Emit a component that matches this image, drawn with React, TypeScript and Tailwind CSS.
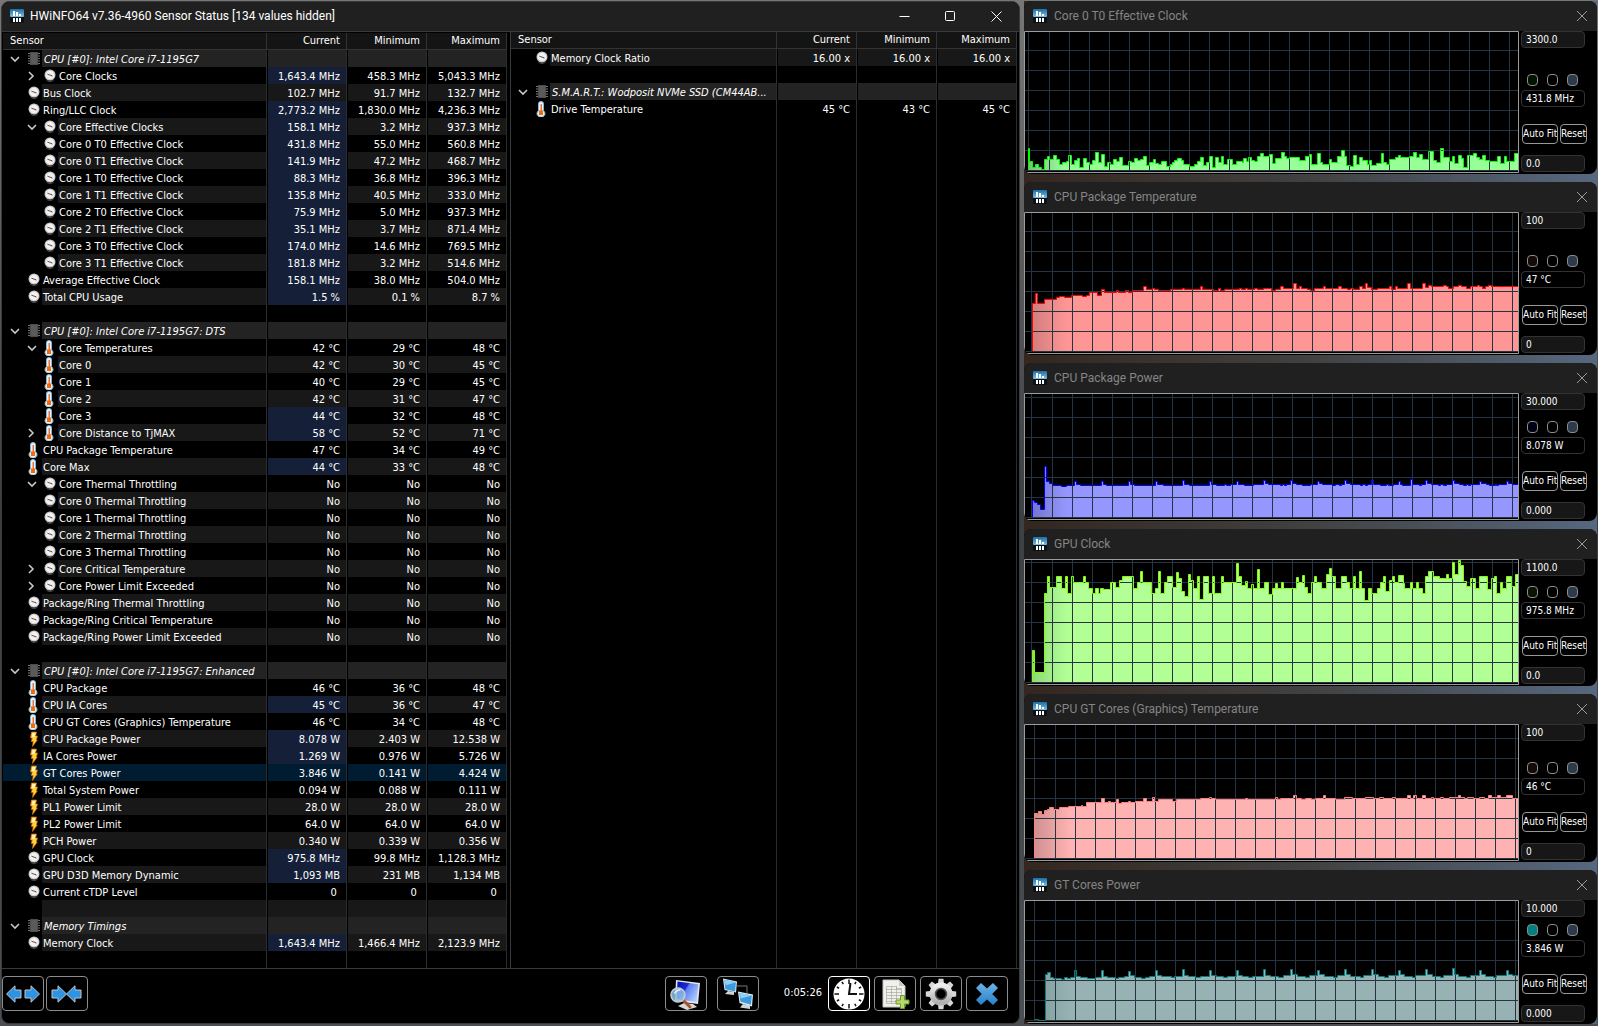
import React from 'react';
import clsx from 'clsx';

type IconName = 'chip' | 'gauge' | 'temp' | 'power';

interface ISensorRow {
  type: 'group' | 'sensor' | 'blank';
  name?: string;
  icon?: IconName;
  nested?: boolean;
  chevron?: 'open' | 'closed';
  values?: string[];
  changed?: boolean;
  selected?: boolean;
}

interface IGraph {
  title: string;
  max: string;
  value: string;
  min: string;
  height: number;
  offset: number;
  line: string;
  fill: string;
  fade: string;
  swatch: string;
  unit: number;
  base: number;
  points: number[][];
}

const group = (name: string): ISensorRow => ({ type: 'group', name, icon: 'chip', chevron: 'open' });
const blank = (): ISensorRow => ({ type: 'blank' });
const sensor = (icon: IconName, name: string, values: string, extra: Partial<ISensorRow> = {}): ISensorRow => ({
  type: 'sensor',
  icon,
  name,
  values: values.split('|'),
  ...extra,
});

const child = { nested: true };
const changed = { changed: true };
const changedChild = { nested: true, changed: true };

const mainRows: ISensorRow[] = [
  group('CPU [#0]: Intel Core i7-1195G7'),
  sensor('gauge', 'Core Clocks', '1,643.4 MHz|458.3 MHz|5,043.3 MHz', { ...changedChild, chevron: 'closed' }),
  sensor('gauge', 'Bus Clock', '102.7 MHz|91.7 MHz|132.7 MHz'),
  sensor('gauge', 'Ring/LLC Clock', '2,773.2 MHz|1,830.0 MHz|4,236.3 MHz', changed),
  sensor('gauge', 'Core Effective Clocks', '158.1 MHz|3.2 MHz|937.3 MHz', { ...changedChild, chevron: 'open' }),
  sensor('gauge', 'Core 0 T0 Effective Clock', '431.8 MHz|55.0 MHz|560.8 MHz', changedChild),
  sensor('gauge', 'Core 0 T1 Effective Clock', '141.9 MHz|47.2 MHz|468.7 MHz', changedChild),
  sensor('gauge', 'Core 1 T0 Effective Clock', '88.3 MHz|36.8 MHz|396.3 MHz', changedChild),
  sensor('gauge', 'Core 1 T1 Effective Clock', '135.8 MHz|40.5 MHz|333.0 MHz', changedChild),
  sensor('gauge', 'Core 2 T0 Effective Clock', '75.9 MHz|5.0 MHz|937.3 MHz', changedChild),
  sensor('gauge', 'Core 2 T1 Effective Clock', '35.1 MHz|3.7 MHz|871.4 MHz', changedChild),
  sensor('gauge', 'Core 3 T0 Effective Clock', '174.0 MHz|14.6 MHz|769.5 MHz', changedChild),
  sensor('gauge', 'Core 3 T1 Effective Clock', '181.8 MHz|3.2 MHz|514.6 MHz', changedChild),
  sensor('gauge', 'Average Effective Clock', '158.1 MHz|38.0 MHz|504.0 MHz', changed),
  sensor('gauge', 'Total CPU Usage', '1.5 %|0.1 %|8.7 %', changed),
  blank(),
  group('CPU [#0]: Intel Core i7-1195G7: DTS'),
  sensor('temp', 'Core Temperatures', '42 °C|29 °C|48 °C', { ...child, chevron: 'open' }),
  sensor('temp', 'Core 0', '42 °C|30 °C|45 °C', child),
  sensor('temp', 'Core 1', '40 °C|29 °C|45 °C', child),
  sensor('temp', 'Core 2', '42 °C|31 °C|47 °C', child),
  sensor('temp', 'Core 3', '44 °C|32 °C|48 °C', changedChild),
  sensor('temp', 'Core Distance to TjMAX', '58 °C|52 °C|71 °C', { ...changedChild, chevron: 'closed' }),
  sensor('temp', 'CPU Package Temperature', '47 °C|34 °C|49 °C'),
  sensor('temp', 'Core Max', '44 °C|33 °C|48 °C', changed),
  sensor('gauge', 'Core Thermal Throttling', 'No|No|No', { ...child, chevron: 'open' }),
  sensor('gauge', 'Core 0 Thermal Throttling', 'No|No|No', child),
  sensor('gauge', 'Core 1 Thermal Throttling', 'No|No|No', child),
  sensor('gauge', 'Core 2 Thermal Throttling', 'No|No|No', child),
  sensor('gauge', 'Core 3 Thermal Throttling', 'No|No|No', child),
  sensor('gauge', 'Core Critical Temperature', 'No|No|No', { ...child, chevron: 'closed' }),
  sensor('gauge', 'Core Power Limit Exceeded', 'No|No|No', { ...child, chevron: 'closed' }),
  sensor('gauge', 'Package/Ring Thermal Throttling', 'No|No|No'),
  sensor('gauge', 'Package/Ring Critical Temperature', 'No|No|No'),
  sensor('gauge', 'Package/Ring Power Limit Exceeded', 'No|No|No'),
  blank(),
  group('CPU [#0]: Intel Core i7-1195G7: Enhanced'),
  sensor('temp', 'CPU Package', '46 °C|36 °C|48 °C'),
  sensor('temp', 'CPU IA Cores', '45 °C|36 °C|47 °C', changed),
  sensor('temp', 'CPU GT Cores (Graphics) Temperature', '46 °C|34 °C|48 °C'),
  sensor('power', 'CPU Package Power', '8.078 W|2.403 W|12.538 W', changed),
  sensor('power', 'IA Cores Power', '1.269 W|0.976 W|5.726 W', changed),
  sensor('power', 'GT Cores Power', '3.846 W|0.141 W|4.424 W', { selected: true }),
  sensor('power', 'Total System Power', '0.094 W|0.088 W|0.111 W'),
  sensor('power', 'PL1 Power Limit', '28.0 W|28.0 W|28.0 W'),
  sensor('power', 'PL2 Power Limit', '64.0 W|64.0 W|64.0 W'),
  sensor('power', 'PCH Power', '0.340 W|0.339 W|0.356 W'),
  sensor('gauge', 'GPU Clock', '975.8 MHz|99.8 MHz|1,128.3 MHz', changed),
  sensor('gauge', 'GPU D3D Memory Dynamic', '1,093 MB|231 MB|1,134 MB', changed),
  sensor('gauge', 'Current cTDP Level', '0\u00a0|0\u00a0|0\u00a0'),
  blank(),
  group('Memory Timings'),
  sensor('gauge', 'Memory Clock', '1,643.4 MHz|1,466.4 MHz|2,123.9 MHz', changed),
];

const sideRows: ISensorRow[] = [
  sensor('gauge', 'Memory Clock Ratio', '16.00 x|16.00 x|16.00 x'),
  blank(),
  group('S.M.A.R.T.: Wodposit NVMe SSD (CM44AB...'),
  sensor('temp', 'Drive Temperature', '45 °C|43 °C|45 °C'),
];

// "x:y x:y ..." -> [[x, y], ...], every pair starts a new step
const parse = (s: string) => s.split(' ').map((p) => p.split(':').map(Number));

const coreClock = parse(
  '24:40 27:80 36:97 47:89 54:97 63:103 74:73 83:64 89:73 101:61 108:73 117:88 126:83 140:80 146:61 153:88 162:76 172:70 179:97 191:70 198:82 207:88 216:76 226:52 234:82 245:58 252:94 263:83 270:88 281:73 290:79 299:67 306:91 325:79 334:83 343:70 351:76 360:73 371:64 378:92 388:82 399:73 405:85 414:88 425:80 439:94 450:88 457:82 463:76 471:70 483:76 490:88 507:94 524:88 533:80 542:67 549:91 560:82 569:64 576:97 587:67 594:82 604:64 611:88 623:73 636:88 650:79 668:82 671:70 678:79 686:67 693:76 704:79 713:64 722:55 729:64 747:58 756:85 767:70 785:52 792:64 800:70 809:67 837:76 857:64 867:58 874:88 891:55 900:82 908:88 928:73 935:82 953:64 963:46 972:64 980:91 990:94 1001:61 1008:88 1019:67 1027:76 1041:88 1049:76 1055:91 1069:85 1083:55 1090:82 1100:88 1108:73 1126:67 1135:61 1142:67 1168:64 1180:52 1188:67 1198:58 1206:73 1225:49 1240:76 1249:82 1261:40 1269:67 1289:79 1297:64 1304:86 1315:61 1323:70 1330:97 1342:61 1360:55 1370:67 1378:73 1387:61 1396:76 1409:79 1433:64 1440:85 1452:64 1459:79 1484:55',
);

const packageTemp = parse(
  '34:388 42:358 48:388 66:376 98:370 106:367 122:370 139:364 170:367 180:364 188:355 210:364 220:346 228:355 261:349 268:355 287:349 293:355 304:349 335:337 342:346 360:343 366:346 375:349 408:346 440:343 447:346 489:337 496:346 524:349 539:343 545:349 555:346 596:343 602:346 612:343 618:346 637:343 643:346 661:343 682:349 692:346 708:337 716:343 741:328 749:343 758:337 765:343 780:346 788:349 800:343 823:337 829:343 864:337 871:343 888:346 897:343 905:346 921:337 928:343 937:328 944:340 953:346 970:343 1003:337 1008:346 1018:337 1025:343 1051:328 1058:343 1092:328 1099:340 1108:334 1115:337 1150:334 1157:337 1163:343 1175:337 1190:334 1197:337 1210:343 1222:337 1240:334 1247:337 1254:343 1263:337 1272:334 1278:337',
);

const packagePower = parse(
  '36:124 43:130 52:134 61:149 74:22 79:67 88:73 97:79 123:82 138:79 164:67 170:76 180:79 245:67 251:76 259:79 326:67 332:76 342:79 407:67 413:76 430:79 488:64 494:76 508:79 569:67 575:76 590:79 612:76 618:79 630:76 650:67 656:76 672:79 700:76 731:64 737:73 746:76 780:79 786:76 792:79 800:76 812:64 818:73 830:76 848:79 872:76 893:67 899:73 908:76 938:79 946:76 958:79 964:76 974:64 980:73 990:76 1020:79 1027:76 1036:79 1042:76 1055:64 1061:76 1082:79 1100:76 1104:79 1120:76 1136:67 1142:76 1148:79 1172:61 1178:76 1198:79 1204:76 1217:64 1223:73 1234:76 1254:79 1262:76 1270:79 1278:76 1298:64 1304:73 1318:76 1330:79 1340:76 1346:79 1352:76 1379:67 1385:73 1398:76 1408:79 1426:76 1430:79 1436:76 1460:67 1466:73 1476:76',
);

const gpuClock = parse(
  '36:571 43:637 73:401 82:349 89:382 109:349 125:385 136:349 143:401 154:349 161:367 190:349 197:367 206:385 217:401 226:385 234:401 240:385 250:388 271:367 286:382 298:361 307:349 340:385 352:367 361:334 368:367 395:401 406:385 415:334 422:401 433:367 442:349 458:382 469:337 476:355 485:394 494:409 505:343 512:361 521:385 532:349 538:418 550:349 565:401 577:349 584:401 604:349 611:367 649:310 656:349 664:376 676:364 683:385 694:373 701:385 712:328 719:385 734:367 745:403 758:385 767:370 773:385 784:367 791:385 829:352 836:367 847:346 854:382 863:401 874:367 883:349 890:367 905:385 920:343 928:325 935:349 946:385 964:349 979:367 988:385 1000:349 1007:385 1018:334 1025:385 1034:421 1046:385 1054:401 1072:385 1081:367 1090:349 1097:394 1108:361 1117:349 1124:367 1135:346 1150:370 1153:385 1171:367 1178:385 1189:367 1196:385 1207:400 1216:349 1225:334 1240:349 1259:355 1280:343 1286:357 1297:307 1304:343 1315:301 1322:316 1330:364 1339:379 1351:355 1366:385 1378:349 1402:388 1414:355 1423:349 1430:400 1441:367 1447:385 1459:349 1474:379 1486:343',
);

const gtTemp = parse(
  '40:370 47:373 51:364 57:373 66:361 74:358 81:352 90:358 106:352 132:349 166:346 170:349 180:337 220:325 228:337 240:334 245:337 261:328 268:340 276:337 293:334 300:337 312:334 335:325 342:334 359:322 366:334 375:328 413:334 424:328 489:325 513:322 520:325 530:328 612:325 618:328 692:322 699:328 708:325 741:317 749:325 763:328 775:325 790:328 802:325 823:317 830:325 855:328 880:322 903:325 937:322 960:325 975:322 987:325 1010:322 1020:325 1051:317 1058:325 1068:317 1075:325 1092:317 1099:325 1115:322 1123:325 1140:322 1150:325 1165:322 1189:317 1196:322 1205:325 1215:322 1230:325 1247:322 1260:325 1271:317 1278:322 1296:317 1303:322 1320:317 1335:325',
);

const gtPower = parse(
  '40:989 50:991 68:853 75:848 82:862 92:865 112:868 122:862 130:865 138:862 148:842 154:859 164:862 184:865 204:862 221:842 227:859 238:862 260:865 268:862 284:859 294:845 300:857 310:862 330:865 340:862 350:859 367:842 374:857 384:859 410:862 418:859 441:838 447:857 458:859 476:862 490:859 514:842 520:857 532:859 552:862 562:859 587:842 593:857 604:859 620:862 630:859 661:838 667:856 680:859 700:862 714:857 734:838 740:854 752:859 774:862 784:857 807:842 813:855 826:859 850:862 860:857 880:838 886:854 896:859 924:862 932:857 953:838 960:854 972:859 990:862 1000:857 1027:842 1033:854 1044:859 1064:862 1072:857 1100:838 1106:855 1118:859 1140:862 1150:857 1173:836 1179:853 1190:859 1210:862 1222:857 1246:842 1252:855 1264:859 1284:862 1294:857 1320:842 1326:854 1336:857',
);

const graphs: IGraph[] = [
  {
    title: 'Core 0 T0 Effective Clock', max: '3300.0', value: '431.8 MHz', min: '0.0', height: 142, offset: 4,
    line: '#00ff00', fill: '#96ff96', fade: '#7dbb7d', swatch: 'bg-[#001400]', unit: 3, base: 106, points: coreClock,
  },
  {
    title: 'CPU Package Temperature', max: '100', value: '47 °C', min: '0', height: 142, offset: 7,
    line: '#ff0000', fill: '#ff9696', fade: '#d07c7c', swatch: 'bg-[#140a08]', unit: 2.7128, base: 531, points: packageTemp,
  },
  {
    title: 'CPU Package Power', max: '30.000', value: '8.078 W', min: '0.000', height: 127, offset: 7,
    line: '#0000ff', fill: '#9696ff', fade: '#7474c8', swatch: 'bg-[#000014]', unit: 3, base: 174, points: packagePower,
  },
  {
    title: 'GPU Clock', max: '1100.0', value: '975.8 MHz', min: '0.0', height: 126, offset: 7,
    line: '#80ff00', fill: '#b2ff96', fade: '#8fd578', swatch: 'bg-[#0a1400]', unit: 3, base: 668, points: gpuClock,
  },
  {
    title: 'CPU GT Cores (Graphics) Temperature', max: '100', value: '46 °C', min: '0', height: 137, offset: 10,
    line: '#ff8080', fill: '#ffb2b2', fade: '#cf9090', swatch: 'bg-[#140a08]', unit: 2.7128, base: 506, points: gtTemp,
  },
  {
    title: 'GT Cores Power', max: '10.000', value: '3.846 W', min: '0.000', height: 123, offset: 10,
    line: '#008080', fill: '#96b2b2', fade: '#7f9c9c', swatch: 'bg-[#008080]', unit: 2.7128, base: 992, points: gtPower,
  },
];

const CHART_WIDTH = 495;

const Chart = ({ graph, id }: { graph: IGraph; id: string }) => {
  const { height, offset, points, unit, base } = graph;
  const floor = height - 3;
  const steps = points.map(([x, y]) => [Math.floor(x / unit) - 3.5, floor + 0.5 - Math.round((base - y) / 3)]);

  let outline = `M${steps[0][0]} ${floor}`;
  steps.forEach(([x, y]) => {
    outline += `H${x}V${y}`;
  });
  outline += `H${CHART_WIDTH - 1}`;

  const columns = [offset];
  for (let x = offset + 21; x < CHART_WIDTH; x += 20) columns.push(x);
  const lines: number[] = [];
  for (let y = floor; y > 0; y -= 20) lines.push(y);

  return (
    <svg
      viewBox={`0 0 ${CHART_WIDTH} ${height}`}
      preserveAspectRatio="none"
      height={height}
      className="block w-full"
      role="img"
      aria-label={graph.title}
    >
      <defs>
        <linearGradient id={id} gradientUnits="userSpaceOnUse" x1={offset} x2={offset + 36} y1="0" y2="0">
          <stop offset="0" stopColor={graph.fade} />
          <stop offset="1" stopColor={graph.fill} />
        </linearGradient>
      </defs>
      <rect width={CHART_WIDTH} height={height} fill="#000" />
      <path d={`${outline}V${floor}Z`} fill={`url(#${id})`} />
      {columns.map((x) => (
        <rect key={x} x={x} y="0" width="1" height={floor} fill="#253443" />
      ))}
      {lines.map((y) => (
        <rect key={y} x="0" y={y} width={CHART_WIDTH} height="1" fill="#253443" />
      ))}
      <path d={outline} fill="none" stroke={graph.line} />
      <path d={`M.5 ${height - 0.5}V.5H${CHART_WIDTH - 0.5}V${height - 0.5}Z`} fill="none" stroke="#9c9c9c" />
    </svg>
  );
};

const AppIcon = () => (
  <svg width="14" height="14" viewBox="0 0 14 14" className="shrink-0">
    <defs>
      <linearGradient id="app-top" x1="0" x2="0" y1="0" y2="1">
        <stop offset="0" stopColor="#1d6ea5" />
        <stop offset="1" stopColor="#7cc0e6" />
      </linearGradient>
    </defs>
    <rect width="14" height="14" rx="1" fill="#0d1115" />
    <rect width="14" height="8" rx="1" fill="url(#app-top)" />
    <path d="M3 2h2v5H3zM6 3h2v4H6zM9 5h2v2H9zM3 9h2v4H3zM6 9h2v4H6zM9 9h2v4H9z" fill="#fff" />
  </svg>
);

const SensorIcon = ({ name }: { name: IconName }) => {
  if (name === 'chip') {
    return (
      <svg width="12" height="14" viewBox="0 0 12 14">
        <path d="M0 1.5h12M0 4h12M0 6.5h12M0 9h12M0 11.5h12" stroke="#777" />
        <rect x="2" y="0" width="8" height="13" fill="#4d4d4d" />
        <rect x="3" y="1" width="6" height="11" fill="#5a5a5a" />
      </svg>
    );
  }
  if (name === 'temp') {
    return (
      <svg width="12" height="16" viewBox="0 0 12 16">
        <path d="M2.500 2.500a2.500 2 0 0 1 5 0v7.200a4 3.600 0 1 1-5 0z" fill="#e4f3fa" stroke="#86b4d2" />
        <path d="M4.500 3h1.500v8H4.500z" fill="#e8763a" />
        <rect x="3" y="9.500" width="4" height="4.500" fill="#f76a08" />
      </svg>
    );
  }
  if (name === 'power') {
    return (
      <svg width="12" height="16" viewBox="0 0 12 16">
        <path d="M3.500 1h5L7.600 5h1.900l-1.200 4h1L4.500 15.500l.7-5H3.300l.9-3.500H2.500z" fill="#ffd23a" stroke="#d8690c" strokeWidth=".7" />
        <path d="M4.500 2h3L6.500 6H4z" fill="#fff2c0" />
      </svg>
    );
  }
  return (
    <svg width="12" height="14" viewBox="0 0 12 14">
      <circle cx="6" cy="6" r="5.5" fill="#c9c9c9" />
      <circle cx="6" cy="6" r="4.3" fill="#f1f1f1" />
      <path d="M3.400 5.200 8 6.800" stroke="#555" />
      <path d="M7 6.500l1.500.5" stroke="#b33" />
      <path d="M2.500 11.500Q6 14 9.500 11.500" fill="none" stroke="#444" />
    </svg>
  );
};

const Chevron = ({ open }: { open: boolean }) => (
  <svg width="10" height="10" viewBox="0 0 10 10" fill="none" stroke="#c8c8c8" strokeWidth="1.6">
    <path d={open ? 'M1 3l4 4 4-4' : 'M2 1l4 4-4 4'} />
  </svg>
);

const SensorTable = ({ rows, label }: { rows: ISensorRow[]; label: string }) => (
  <table
    className="w-full h-full table-fixed border-separate border-spacing-0 text-[11px] leading-[15px]"
    aria-label={label}
  >
    <thead>
      <tr className="h-[17px] bg-[#141414] leading-4">
        <th className="h-[17px] p-0 pl-[7px] text-left font-normal border-b border-r border-[#333]">Sensor</th>
        {['Current', 'Minimum', 'Maximum'].map((title) => (
          <th key={title} className="w-[80px] p-0 pr-[6px] text-right font-normal border-b border-r border-[#333]">
            {title}
          </th>
        ))}
      </tr>
    </thead>
    <tbody>
      {rows.map((row, i) => {
        const band = row.selected
          ? 'bg-[#001c31]'
          : row.type === 'group'
            ? 'bg-[#232323]'
            : i % 2 === 0
              ? 'bg-[#181818]'
              : 'bg-black';
        return (
          <tr key={i} className="h-[17px]">
            <td className={clsx('p-0 border-r border-[#2a2d30]', row.selected && 'bg-[#001c31]')}>
              <div className="flex h-[17px] overflow-hidden">
                <div
                  className={clsx(
                    'flex shrink-0 items-center pr-[2px]',
                    row.nested ? 'w-[55px] pl-[24px]' : 'w-[39px] pl-[7px]',
                  )}
                >
                  {row.chevron && (
                    <button aria-label={`Toggle ${row.name}`}>
                      <Chevron open={row.chevron === 'open'} />
                    </button>
                  )}
                  <span className="ml-auto">{row.icon && <SensorIcon name={row.icon} />}</span>
                </div>
                <div
                  className={clsx(
                    'flex-1 pt-[2px] whitespace-nowrap overflow-hidden',
                    band,
                    row.type === 'group' ? 'pl-[2px] italic' : 'pl-px',
                  )}
                >
                  {row.name}
                </div>
              </div>
            </td>
            {[0, 1, 2].map((col) => (
              <td
                key={col}
                className={clsx(
                  'p-0 pt-[2px] pr-[6px] text-right whitespace-nowrap border-r border-r-[#2a2d30] border-l border-l-black',
                  col === 0 && row.changed ? 'bg-[#152038]' : band,
                )}
              >
                {row.values?.[col]}
              </td>
            ))}
          </tr>
        );
      })}
      <tr className="h-full">
        {[0, 1, 2, 3].map((col) => (
          <td key={col} className="p-0 border-r border-[#2a2d30]" />
        ))}
      </tr>
    </tbody>
  </table>
);

const ToolButton = ({ label, active, children }: { label: string; active?: boolean; children: React.ReactNode }) => (
  <button
    aria-label={label}
    className={clsx(
      'flex h-[35px] w-[42px] shrink-0 items-center justify-center rounded border bg-black',
      active ? 'border-white' : 'border-[#8c8c8c]',
    )}
  >
    {children}
  </button>
);

const ARROW_LEFT = 'M0.5 9 9 0.8V5h6v8H9v4.2z';

const ArrowsIcon = ({ inward }: { inward?: boolean }) => (
  <svg width="34" height="18" viewBox="0 0 34 18" fill="#2f93e4" stroke="#b9c6d0" strokeWidth="1">
    <path d={ARROW_LEFT} transform={inward ? 'translate(16 0)' : undefined} />
    <path d={ARROW_LEFT} transform={inward ? 'translate(17 0) scale(-1 1)' : 'translate(34 0) scale(-1 1)'} />
  </svg>
);

const MonitorSearchIcon = () => (
  <svg width="32" height="32" viewBox="0 0 32 32">
    <defs>
      <linearGradient id="screen" x1="0" x2="1" y1="0" y2=".6">
        <stop offset="0" stopColor="#0010b8" />
        <stop offset=".45" stopColor="#1b2bd0" />
        <stop offset=".5" stopColor="#5c7cf0" />
        <stop offset="1" stopColor="#a9c8ff" />
      </linearGradient>
    </defs>
    <path d="M14 25l9 1 4 3-10 3-9-4z" fill="#d8d8d8" />
    <path d="M6 2l24 3-2 21-23-3z" fill="#e9e9e9" />
    <path d="M7.500 3.500l20.800 2.700-1.700 17.800L6.600 21.200z" fill="url(#screen)" />
    <path d="M12 21l8 8" stroke="#a4562a" strokeWidth="3" strokeLinecap="round" />
    <circle cx="8" cy="17" r="7" fill="#8fc0e4" fillOpacity=".85" stroke="#c4ccd2" strokeWidth="1.600" />
    <path d="M4.500 15.500q2-4 6-3.500" fill="none" stroke="#e8f6ff" strokeWidth="1.500" />
  </svg>
);

const NetworkIcon = () => (
  <svg width="32" height="32" viewBox="0 0 32 32">
    <path d="M15 8h10v7" fill="none" stroke="#777" />
    <path d="M6 13l6 1v3l-9-1z" fill="#cfd4d8" />
    <path d="M1 .5l14 3-1 11L2.500 12z" fill="#e4eaee" />
    <path d="M2.200 1.800l11.700 2.500-.8 9.200-9.700-2.300z" fill="#3b9be0" />
    <path d="M2.200 1.800l11.700 2.500-10 3z" fill="#8fd0f6" />
    <path d="M21 26l7 1.500v3.500l-10-1.500z" fill="#cfd4d8" />
    <path d="M16 13.500l15 3-1 12-12.500-3.500z" fill="#e4eaee" />
    <path d="M17.200 14.900l12.600 2.500-.8 9.400-10.500-3z" fill="#3b9be0" />
    <path d="M17.200 14.900l12.600 2.500-11 3.200z" fill="#8fd0f6" />
  </svg>
);

const ClockIcon = () => (
  <svg width="32" height="32" viewBox="0 0 32 32">
    <circle cx="16" cy="16" r="15.500" fill="#fff" />
    {Array.from({ length: 12 }, (_, i) => (
      <path key={i} d={i % 3 ? 'M16 2v2.500' : 'M16 1.500v4.500'} stroke="#111" strokeWidth="1.500" transform={`rotate(${i * 30} 16 16)`} />
    ))}
    <path d="M17.500 5 16 16h8" fill="none" stroke="#111" strokeWidth="2" />
  </svg>
);

const SheetIcon = () => (
  <svg width="30" height="32" viewBox="0 0 30 32">
    <path d="M3 2h16l6 6v21H3z" fill="#f1f1ec" stroke="#c5c5c0" />
    <path d="M19 2v6h6z" fill="#c9c9c4" />
    <path d="M6.500 8.500h10v2h5v15h-15zM6.500 11.500h15M6.500 14.500h15M6.500 17.500h15M6.500 20.500h15M6.500 23.500h15M11.500 8v18M16.500 8v18" fill="none" stroke="#a9a9a4" strokeWidth=".7" />
    <path d="M20.500 17.500h4v4.500h4.500v4h-4.500v4.500h-4V26H16v-4h4.500z" fill="#b5d96a" stroke="#6f9a28" />
  </svg>
);

const GearIcon = () => (
  <svg width="32" height="32" viewBox="0 0 32 32">
    <defs>
      <linearGradient id="gear" x1="0" x2="0" y1="0" y2="1">
        <stop offset="0" stopColor="#efefef" />
        <stop offset="1" stopColor="#b0b0b0" />
      </linearGradient>
    </defs>
    {Array.from({ length: 8 }, (_, i) => (
      <path key={i} d="M12.800 7 13.600.8h4.800l.8 6.200z" fill="#d8d8d8" transform={`rotate(${i * 45} 16 16)`} />
    ))}
    <circle cx="16" cy="16" r="8.500" fill="none" stroke="url(#gear)" strokeWidth="6" />
    <circle cx="16" cy="16" r="5.500" fill="#000" stroke="#555" strokeWidth="1.500" />
  </svg>
);

const CloseToolIcon = () => (
  <svg width="26" height="26" viewBox="0 0 26 26">
    <defs>
      <linearGradient id="cross" x1="0" x2="0" y1="0" y2="1">
        <stop offset="0" stopColor="#6db4e4" />
        <stop offset="1" stopColor="#2580cd" />
      </linearGradient>
    </defs>
    <path d="M2 7 7 2l6 5.500L19 2l5 5-5.800 6L24 19l-5 5-6-5.500L7 24l-5-5 5.800-6z" fill="url(#cross)" />
  </svg>
);

const MainWindow = () => (
  <main className="flex flex-col overflow-hidden rounded-lg border border-[#3a3a3a] bg-black">
    <header className="flex h-[29px] items-center bg-[#202020] pb-px pl-2 text-xs font-[Roboto,sans-serif]">
      <AppIcon />
      <h1 className="flex-1 pl-[6px]">HWiNFO64 v7.36-4960 Sensor Status [134 values hidden]</h1>
      <button aria-label="Minimize" className="flex w-[46px] justify-center">
        <svg width="11" height="11" viewBox="0 0 11 11" stroke="#fff">
          <path d="M.5 5.500h10" />
        </svg>
      </button>
      <button aria-label="Maximize" className="flex w-[46px] justify-center">
        <svg width="11" height="11" viewBox="0 0 11 11" stroke="#fff" fill="none">
          <rect x=".5" y=".5" width="9" height="9" rx="1" />
        </svg>
      </button>
      <button aria-label="Close" className="flex w-[46px] justify-center">
        <svg width="11" height="11" viewBox="0 0 11 11" stroke="#fff">
          <path d="M.5.5l10 10M10.500.5l-10 10" />
        </svg>
      </button>
    </header>
    <div className="grid flex-1 grid-cols-[508fr_509fr] border-y border-[#3a3a3a]">
      <div className="pl-px pr-[3px] pt-px">
        <SensorTable rows={mainRows} label="Sensors" />
      </div>
      <div className="border-l border-[#3a3a3a] pr-[2px]">
        <SensorTable rows={sideRows} label="More sensors" />
      </div>
    </div>
    <footer className="flex h-[54px] items-center pb-[5px] pr-[11px] text-[11px]">
      <div className="flex gap-[2px]">
        <ToolButton label="Expand columns">
          <ArrowsIcon />
        </ToolButton>
        <ToolButton label="Shrink columns">
          <ArrowsIcon inward />
        </ToolButton>
      </div>
      <div className="ml-auto flex items-center">
        <div className="flex gap-[10px]">
          <ToolButton label="System summary">
            <MonitorSearchIcon />
          </ToolButton>
          <ToolButton label="Remote monitoring">
            <NetworkIcon />
          </ToolButton>
        </div>
        <time className="pl-[25px] pr-[6px]">0:05:26</time>
        <div className="flex gap-1">
          <ToolButton label="Reset clock" active>
            <ClockIcon />
          </ToolButton>
          <ToolButton label="Start logging">
            <SheetIcon />
          </ToolButton>
          <ToolButton label="Settings">
            <GearIcon />
          </ToolButton>
          <ToolButton label="Close sensors">
            <CloseToolIcon />
          </ToolButton>
        </div>
      </div>
    </footer>
  </main>
);

const field = 'h-[17px] w-[64px] shrink-0 rounded-sm border border-[#333] px-1 text-[10px] leading-[15px] text-white';
const swatchButton = 'h-3 w-[11px] rounded border border-[#8c8c8c]';
const smallButton = 'h-5 overflow-hidden whitespace-nowrap rounded border border-[#999] bg-black text-[10px] leading-none';

const GraphWindow = ({ graph, id }: { graph: IGraph; id: string }) => (
  <section className="overflow-hidden rounded-lg bg-black pb-px">
    <header className="flex h-[30px] items-center bg-[#202020] pb-px pl-[9px] pr-[10px] text-xs font-[Roboto,sans-serif] text-[#858585]">
      <AppIcon />
      <h2 className="flex-1 pl-[7px]">{graph.title}</h2>
      <button aria-label={`Close ${graph.title}`}>
        <svg width="10" height="10" viewBox="0 0 10 10" stroke="#9a9a9a">
          <path d="M0 0l10 10M10 0L0 10" />
        </svg>
      </button>
    </header>
    <div className="flex">
      <div className="min-w-0 flex-1">
        <Chart graph={graph} id={id} />
      </div>
      <div className="flex w-[78px] flex-col pl-[2px] pb-px">
        <input aria-label="Graph maximum" className={clsx(field, 'bg-[#171717]')} defaultValue={graph.max} />
        <div className="mt-auto flex gap-[9px] pl-[6px]">
          <button aria-label="Line color" className={clsx(swatchButton, graph.swatch)} />
          <button aria-label="Background color" className={clsx(swatchButton, 'bg-black')} />
          <button aria-label="Grid color" className={clsx(swatchButton, 'bg-[#2c3a4b]')} />
        </div>
        <input aria-label="Current value" readOnly className={clsx(field, 'mt-1 bg-black')} value={graph.value} />
        <div className="mt-[17px] flex gap-[2px] pl-px">
          <button className={clsx(smallButton, 'w-[36px]')}>Auto Fit</button>
          <button className={clsx(smallButton, 'w-[27px]')}>Reset</button>
        </div>
        <input aria-label="Graph minimum" className={clsx(field, 'mt-[11px] bg-[#171717]')} defaultValue={graph.min} />
      </div>
    </div>
  </section>
);

export default () => (
  <div className="grid min-h-screen grid-cols-[1019fr_573fr] gap-x-1 bg-linear-to-b from-[#777] via-[#3c3f43] to-[#4a4f55] pb-[2px] pl-px pr-px pt-px font-['DejaVu_Sans_Condensed','DejaVu_Sans',sans-serif] text-white">
    <MainWindow />
    <aside className="flex flex-col gap-2 bg-linear-to-r from-[#33271f] via-[#414141] to-[#56687f]">
      {graphs.map((graph, i) => (
        <GraphWindow key={graph.title} graph={graph} id={`fill-${i}`} />
      ))}
    </aside>
  </div>
);
